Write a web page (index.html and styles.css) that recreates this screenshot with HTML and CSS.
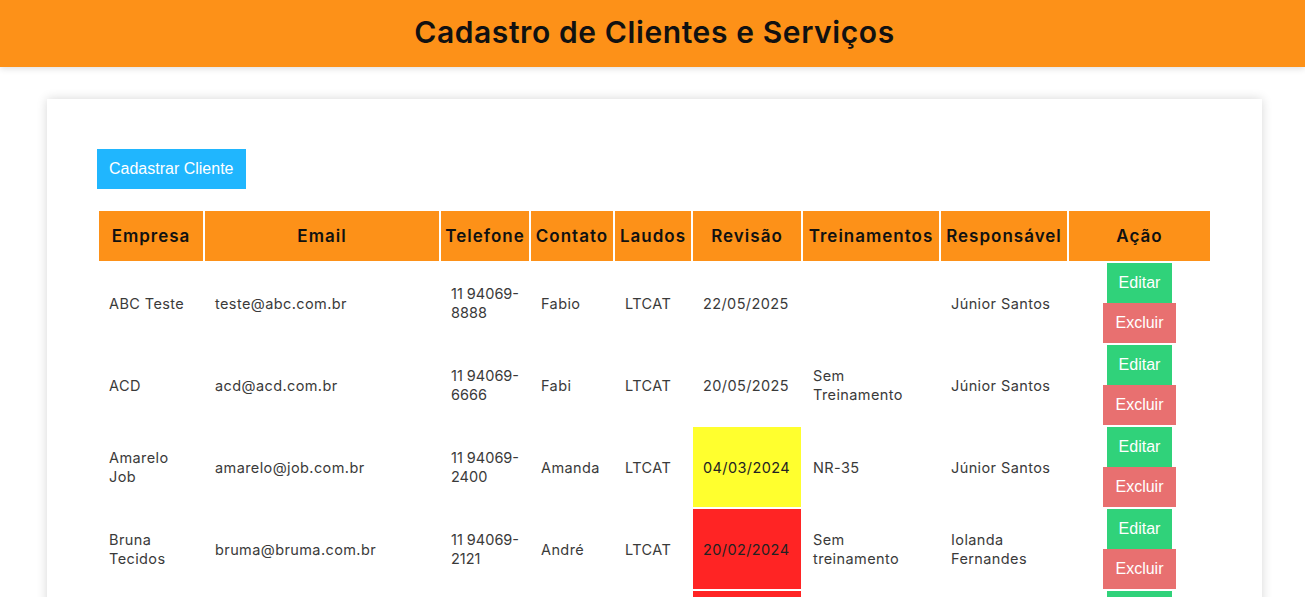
FILE: index.html
```html
<!DOCTYPE html>
<html lang="pt-BR">
<head>
<meta charset="utf-8">
<title>Cadastro de Clientes e Serviços</title>
<link rel="stylesheet" href="styles.css">
</head>
<body>
<header class="topbar">
  <h1 class="title">Cadastro de Clientes e Serviços</h1>
</header>
<main class="card">
  <button class="btn btn-new">Cadastrar Cliente</button>
  <table class="grid">
    <thead>
      <tr>
        <th class="c-emp">Empresa</th>
        <th class="c-mail">Email</th>
        <th class="c-tel">Telefone</th>
        <th class="c-cont">Contato</th>
        <th class="c-laud">Laudos</th>
        <th class="c-rev">Revisão</th>
        <th class="c-trei">Treinamentos</th>
        <th class="c-resp">Responsável</th>
        <th class="c-acao">Ação</th>
      </tr>
    </thead>
    <tbody>
      <tr>
        <td>ABC Teste</td>
        <td>teste@abc.com.br</td>
        <td class="tel">11&nbsp;94069-8888</td>
        <td>Fabio</td>
        <td>LTCAT</td>
        <td>22/05/2025</td>
        <td></td>
        <td>Júnior Santos</td>
        <td class="actions"><div class="stack"><button class="btn btn-edit">Editar</button><button class="btn btn-del">Excluir</button></div></td>
      </tr>
      <tr>
        <td>ACD</td>
        <td>acd@acd.com.br</td>
        <td class="tel">11&nbsp;94069-6666</td>
        <td>Fabi</td>
        <td>LTCAT</td>
        <td>20/05/2025</td>
        <td>Sem Treinamento</td>
        <td>Júnior Santos</td>
        <td class="actions"><div class="stack"><button class="btn btn-edit">Editar</button><button class="btn btn-del">Excluir</button></div></td>
      </tr>
      <tr>
        <td>Amarelo Job</td>
        <td>amarelo@job.com.br</td>
        <td class="tel">11&nbsp;94069-2400</td>
        <td>Amanda</td>
        <td>LTCAT</td>
        <td class="warn">04/03/2024</td>
        <td>NR-35</td>
        <td>Júnior Santos</td>
        <td class="actions"><div class="stack"><button class="btn btn-edit">Editar</button><button class="btn btn-del">Excluir</button></div></td>
      </tr>
      <tr>
        <td>Bruna Tecidos</td>
        <td>bruma@bruma.com.br</td>
        <td class="tel">11&nbsp;94069-2121</td>
        <td>André</td>
        <td>LTCAT</td>
        <td class="late">20/02/2024</td>
        <td>Sem treinamento</td>
        <td>Iolanda Fernandes</td>
        <td class="actions"><div class="stack"><button class="btn btn-edit">Editar</button><button class="btn btn-del">Excluir</button></div></td>
      </tr>
      <tr>
        <td>Casa Verde</td>
        <td>contato@casaverde.com.br</td>
        <td class="tel">11&nbsp;94069-3030</td>
        <td>Carla</td>
        <td>LTCAT</td>
        <td class="late">10/01/2024</td>
        <td>NR-10</td>
        <td>Júnior Santos</td>
        <td class="actions"><div class="stack"><button class="btn btn-edit">Editar</button><button class="btn btn-del">Excluir</button></div></td>
      </tr>
    </tbody>
  </table>
</main>
</body>
</html>
```

FILE: styles.css
```css
* { box-sizing: border-box; }

html, body {
  margin: 0;
  padding: 0;
  background: #ffffff;
}

body {
  font-family: "Inter", "Open Sans", sans-serif;
  color: #3a3a3a;
}

.topbar {
  height: 67px;
  background: #fd9118;
  display: flex;
  align-items: center;
  justify-content: center;
  padding-bottom: 3px;
  padding-left: 4px;
  box-shadow: 0 2px 6px rgba(0, 0, 0, 0.12);
}

.title {
  margin: 0;
  font-size: 30px;
  font-weight: 600;
  letter-spacing: 0.6px;
  color: #111;
}

.card {
  margin: 32px 43px 0 47px;
  padding: 50px 50px 40px 50px;
  background: #fff;
  box-shadow: 0 0 10px rgba(0, 0, 0, 0.16);
}

.btn {
  border: 0;
  border-radius: 0;
  font-family: "Liberation Sans", Arial, sans-serif;
  font-size: 16px;
  line-height: 18px;
  color: #fff;
  cursor: pointer;
  display: block;
}

.btn-new {
  background: #20b6fe;
  padding: 11px 12px;
  margin-bottom: 20px;
}

.grid {
  width: 100%;
  table-layout: fixed;
  border-collapse: separate;
  border-spacing: 2px;
}

.grid th {
  height: 50px;
  padding: 0;
  background: #fd9118;
  color: #111;
  font-size: 17px;
  font-weight: 600;
  letter-spacing: 1px;
  text-align: center;
  vertical-align: middle;
  white-space: nowrap;
}

.c-emp { width: 104px; }
.c-mail { width: 234px; }
.c-tel { width: 88px; }
.c-cont { width: 82px; }
.c-laud { width: 76px; }
.c-rev { width: 108px; }
.c-trei { width: 136px; }
.c-resp { width: 126px; }
.c-acao { width: 141px; }

.grid td {
  height: 80px;
  padding: 0 10px;
  font-size: 14.5px;
  line-height: 19px;
  letter-spacing: 0.4px;
  color: #3a3a3a;
  vertical-align: middle;
  text-align: left;
}

.grid td.tel { letter-spacing: 0; padding-right: 4px; }

.grid td.warn { background: #ffff2e; color: #222; }
.grid td.late { background: #ff2424; color: #222; }

.grid td.actions { padding: 0; }

.stack {
  display: flex;
  flex-direction: column;
  align-items: center;
}

.btn-edit {
  background: #30d27a;
  padding: 11px 12px;
}

.btn-del {
  background: #e87070;
  padding: 11px 12px;
}
```
